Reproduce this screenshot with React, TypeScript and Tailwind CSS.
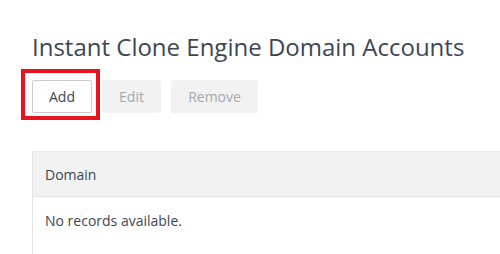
import React from "react";

export default function App() {
  return (
    <div className="w-[500px] h-[254px] overflow-hidden bg-white [font-family:'Open_Sans',sans-serif] text-[#3d4754]">
      <div className="pl-8 pt-[31px]">
        <h1 className="text-[24px] leading-[32px] font-normal text-[#3d4754] whitespace-nowrap">
          Instant Clone Engine Domain Accounts
        </h1>
        <div className="flex items-center gap-[10px] mt-[17px]">
          <div className="relative">
            <button className="w-[60px] h-[33px] border border-[#c9cdd2] rounded-[2px] bg-white text-[14px] text-[#3d4754]">
              Add
            </button>
            <div className="absolute -left-[11px] -top-[11px] -right-[8px] -bottom-[7px] border-[4px] border-[#e8141f] pointer-events-none" />
          </div>
          <button className="w-[59px] h-[33px] rounded-[2px] bg-[#f2f2f2] text-[14px] text-[#a3a8ae]">
            Edit
          </button>
          <button className="w-[87px] h-[33px] rounded-[2px] bg-[#f2f2f2] text-[14px] text-[#a3a8ae]">
            Remove
          </button>
        </div>
        <div className="mt-[38px] w-[500px] border-l border-t border-[#e6e6e6]">
          <div className="h-[45px] bg-[#f2f2f2] border-b border-[#e2e2e2] flex items-center pl-[12px] text-[14px] text-[#3d4754]">
            Domain
          </div>
          <div className="h-[60px] pl-[12px] pt-[13px] text-[14px] text-[#3d4754]">
            No records available.
          </div>
        </div>
      </div>
    </div>
  );
}
